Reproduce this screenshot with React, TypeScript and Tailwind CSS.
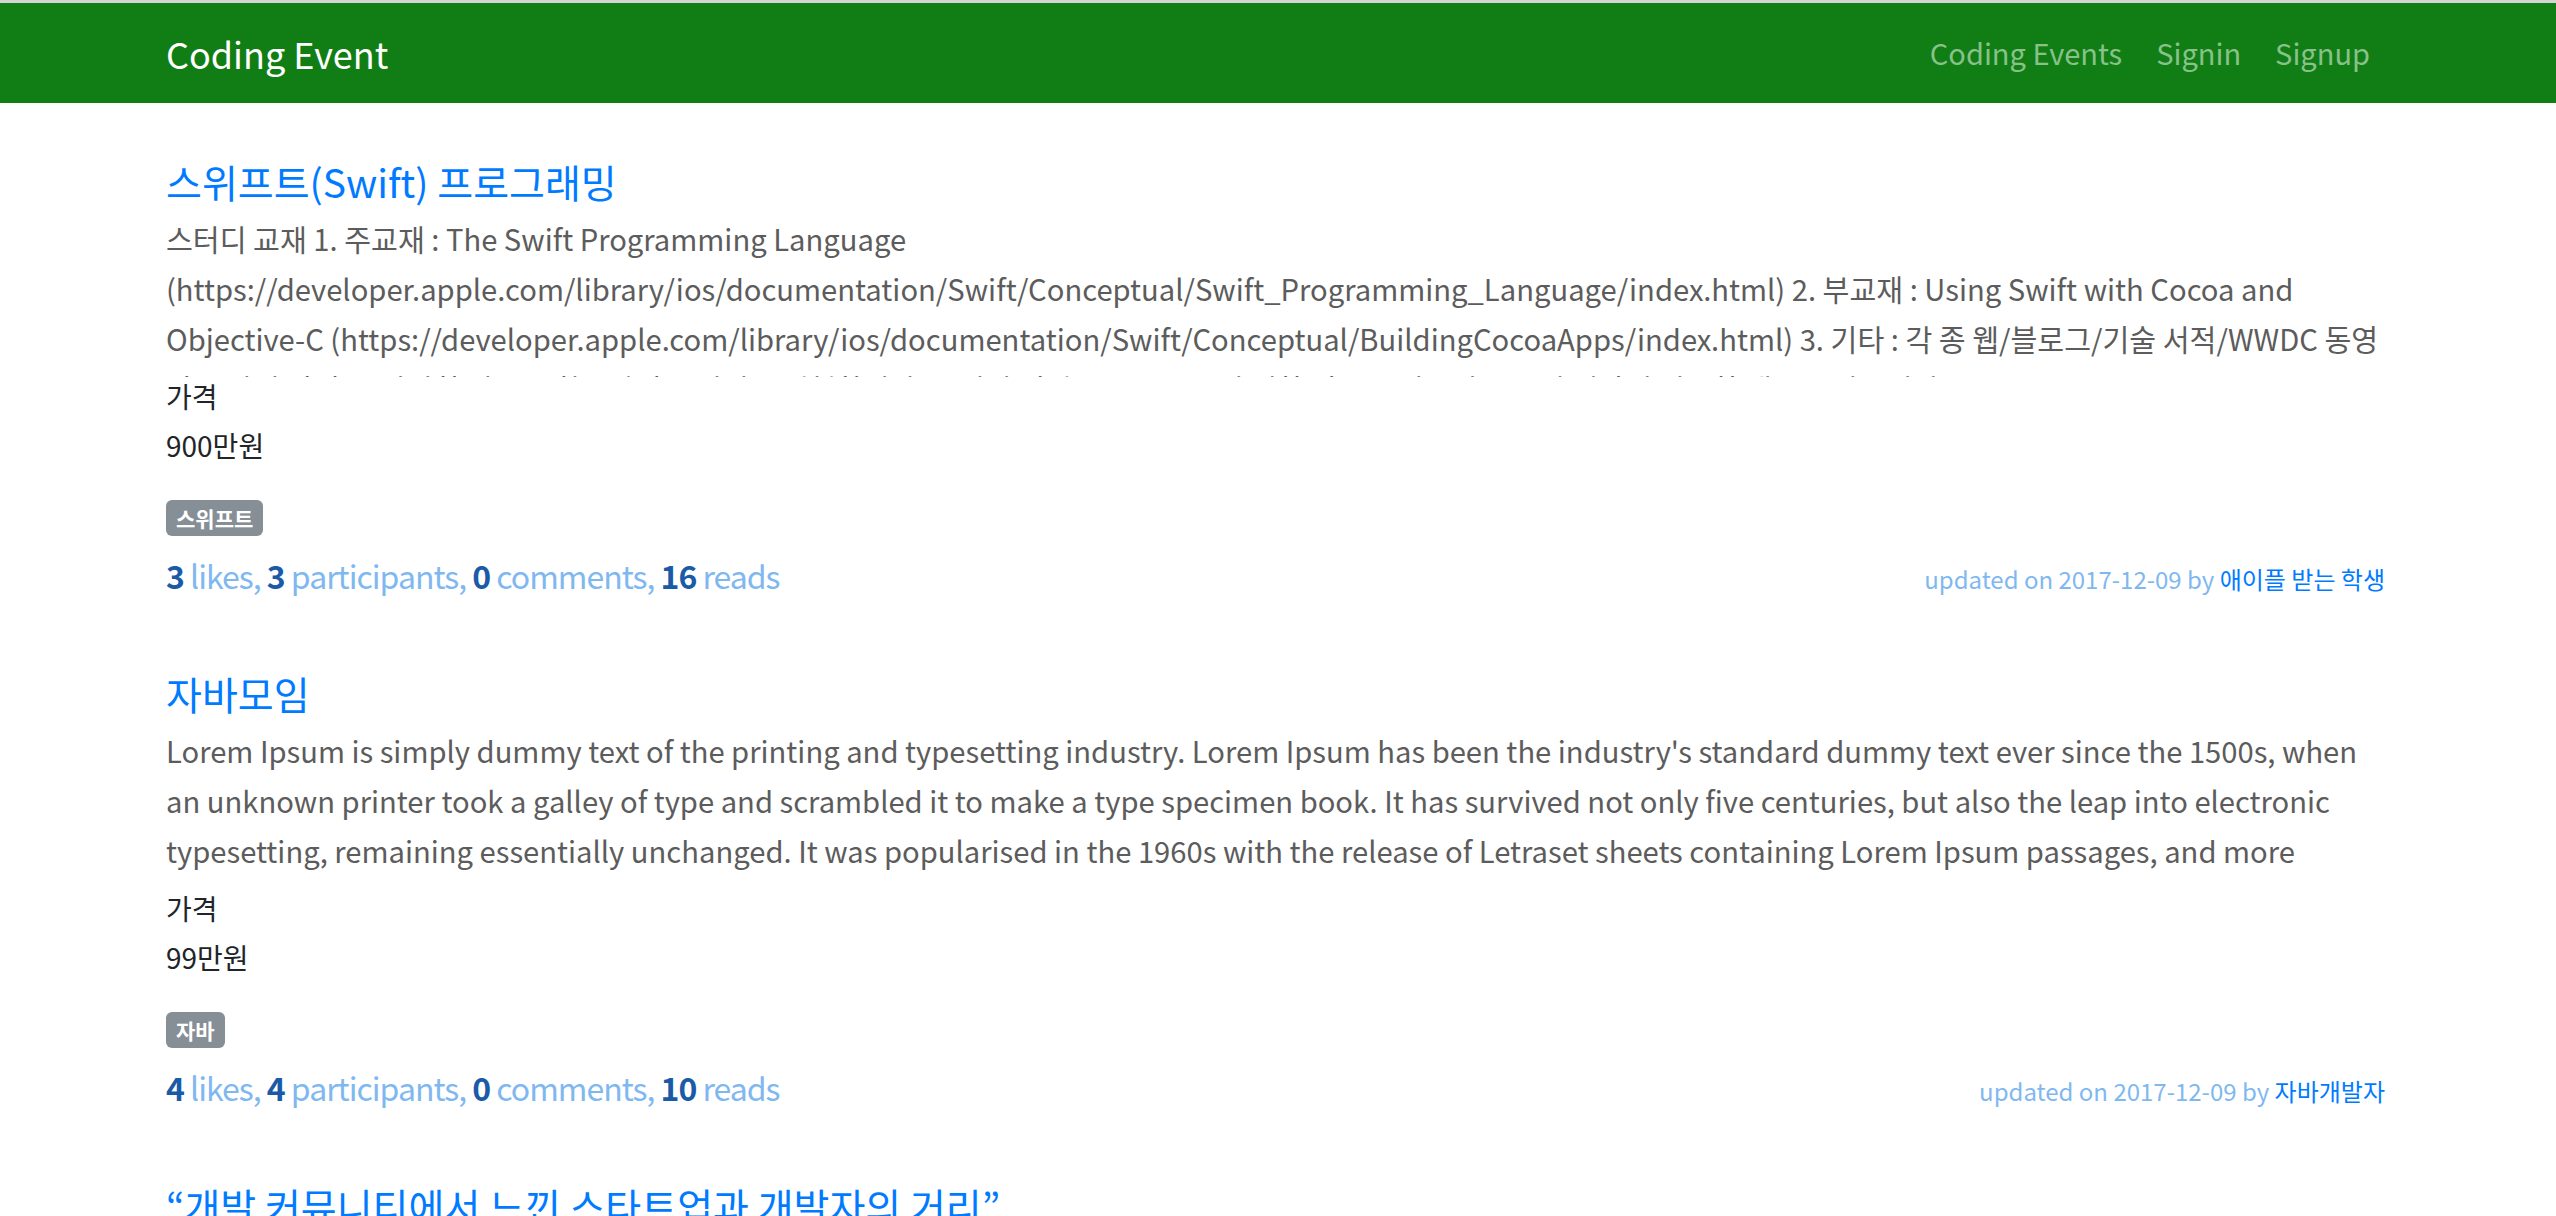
import React from 'react'

const font = { fontFamily: '"Noto Sans CJK KR", "Noto Sans", sans-serif' }

type Event = {
  title: string
  desc: string
  price: string
  tag: string
  likes: number
  participants: number
  comments: number
  reads: number
  updated: string
  author: string
}

const events: Event[] = [
  {
    title: '스위프트(Swift) 프로그래밍',
    desc:
      '스터디 교재 1. 주교재 : The Swift Programming Language (https://developer.apple.com/library/ios/documentation/Swift/Conceptual/Swift_Programming_Language/index.html) 2. 부교재 : Using Swift with Cocoa and Objective-C (https://developer.apple.com/library/ios/documentation/Swift/Conceptual/BuildingCocoaApps/index.html) 3. 기타 : 각 종 웹/블로그/기술 서적/WWDC 동영상 온라인 강의 등 다양한 자료를 활용하여 스터디를 진행합니다. 스터디 범위 : Swift 4.0 에 대한 기본 문법부터 iOS 앱 개발에 필요한 내용을 다룹니다.',
    price: '900만원',
    tag: '스위프트',
    likes: 3,
    participants: 3,
    comments: 0,
    reads: 16,
    updated: '2017-12-09',
    author: '애이플 받는 학생',
  },
  {
    title: '자바모임',
    desc:
      "Lorem Ipsum is simply dummy text of the printing and typesetting industry. Lorem Ipsum has been the industry's standard dummy text ever since the 1500s, when an unknown printer took a galley of type and scrambled it to make a type specimen book. It has survived not only five centuries, but also the leap into electronic typesetting, remaining essentially unchanged. It was popularised in the 1960s with the release of Letraset sheets containing Lorem Ipsum passages, and more recently with desktop publishing software like Aldus PageMaker including versions of Lorem Ipsum.",
    price: '99만원',
    tag: '자바',
    likes: 4,
    participants: 4,
    comments: 0,
    reads: 10,
    updated: '2017-12-09',
    author: '자바개발자',
  },
  {
    title: '“개발 커뮤니티에서 느낀 스타트업과 개발자의 거리”',
    desc:
      '개발 커뮤니티를 운영하면서 느낀 스타트업과 개발자 사이의 거리에 대해 이야기를 나누는 자리입니다. 스타트업에서 일하고 싶은 개발자, 개발자를 채용하고 싶은 스타트업 모두 환영합니다.',
    price: '무료',
    tag: '스타트업',
    likes: 2,
    participants: 5,
    comments: 1,
    reads: 21,
    updated: '2017-12-09',
    author: '커뮤니티 운영자',
  },
]

function Stat({ n, label, last }: { n: number; label: string; last?: boolean }) {
  return (
    <>
      <span className="font-bold text-[#1a5ba8]">{n}</span>
      <span className="text-[#7fb8f0]"> {label}{last ? '' : ', '}</span>
    </>
  )
}

function EventCard({ e }: { e: Event }) {
  return (
    <div className="mb-[73px]">
      <h3 className="text-[39px] leading-[46px] text-[#007bff]">{e.title}</h3>
      <p className="mt-[9px] max-h-[164px] overflow-hidden text-[29.2px] leading-[50px] text-[#5c5c5c]">
        {e.desc}
      </p>
      <div className="mt-[2px] text-[28px] text-[#212529]">
        <div className="leading-[34px]">가격</div>
        <div className="leading-[64px]">{e.price}</div>
      </div>
      <div className="mt-[23px] flex">
        <span className="rounded-[6px] bg-[#868e96] px-[10px] text-[21px] font-bold leading-[36px] text-white">
          {e.tag}
        </span>
      </div>
      <div className="mt-[19px] flex items-baseline justify-between">
        <div className="text-[32px] leading-[40px] tracking-[-1px]">
          <Stat n={e.likes} label="likes" />
          <Stat n={e.participants} label="participants" />
          <Stat n={e.comments} label="comments" />
          <Stat n={e.reads} label="reads" last />
        </div>
        <div className="text-[24px] text-[#7fb8f0]">
          updated on {e.updated} by <span className="text-[#007bff]">{e.author}</span>
        </div>
      </div>
    </div>
  )
}

export default function App() {
  return (
    <div className="min-h-screen bg-white" style={font}>
      <div className="h-[3px] bg-[#d4d4d4]" />
      <nav className="flex h-[100px] items-center justify-between bg-[#107e14] pl-[166px] pr-[186px]">
        <span className="text-[36px] text-white">Coding Event</span>
        <div className="flex gap-[34px] text-[29px] text-[#88c18a]">
          <span>Coding Events</span>
          <span>Signin</span>
          <span>Signup</span>
        </div>
      </nav>
      <main className="pl-[166px] pr-[171px] pt-[55px]">
        {events.map(e => (
          <EventCard key={e.title} e={e} />
        ))}
      </main>
    </div>
  )
}
